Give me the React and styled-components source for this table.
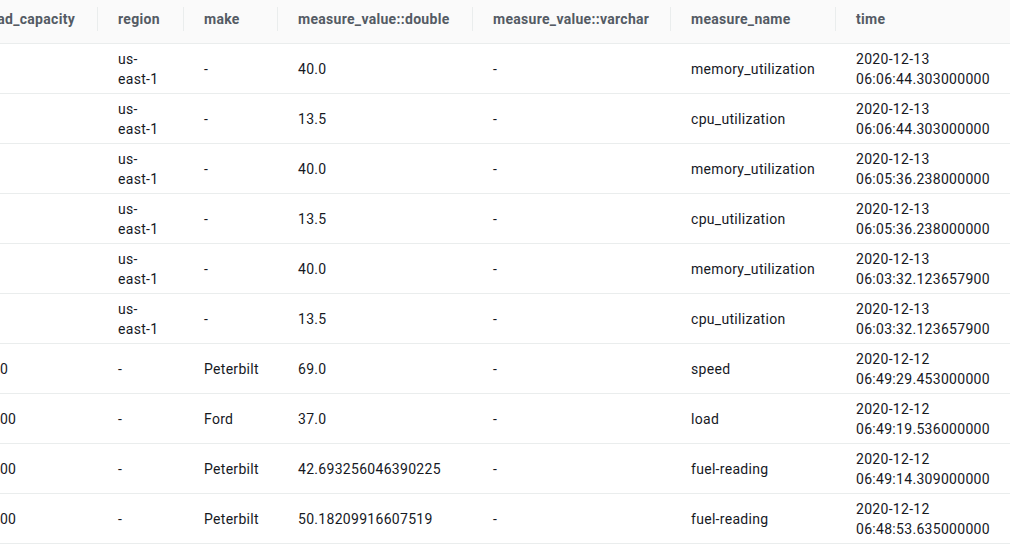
import React from "react";
import styled, { createGlobalStyle } from "styled-components";

const Global = createGlobalStyle`
  html, body { margin: 0; padding: 0; background: #ffffff; }
  body { font-family: Roboto, "Open Sans", Arial, sans-serif; -webkit-font-smoothing: antialiased; }
`;

const Viewport = styled.div`
  width: 1010px;
  height: 545px;
  overflow: hidden;
  background: #ffffff;
`;

const Table = styled.table`
  border-collapse: separate;
  border-spacing: 0;
  table-layout: fixed;
  width: ${(p) => p.$width}px;
  margin-left: -36px;
  font-size: 14px;
  line-height: 20px;
  letter-spacing: 0.3px;
  color: #16191f;
`;

const HeadCell = styled.th`
  position: relative;
  height: 38px;
  padding: 0 20px 5px 21px;
  background: #fafafa;
  border-bottom: 1px solid #eaeded;
  text-align: left;
  font-weight: 700;
  color: #545b64;
  white-space: nowrap;
  overflow: hidden;
  vertical-align: middle;
  &::before {
    content: "";
    display: ${(p) => (p.$first ? "none" : "block")};
    position: absolute;
    left: 0;
    top: 7px;
    height: 24px;
    width: 1px;
    background: #eaeded;
  }
`;

const Cell = styled.td`
  height: 49px;
  padding: 0 16px 0 ${(p) => (p.$first ? "19.6px" : "21px")};
  border-bottom: 1px solid #eaeded;
  vertical-align: middle;
  text-align: left;
  overflow-wrap: break-word;
`;

const columns = [
  { key: "load_capacity", width: 133 },
  { key: "region", width: 86 },
  { key: "make", width: 94 },
  { key: "measure_value::double", width: 195 },
  { key: "measure_value::varchar", width: 198 },
  { key: "measure_name", width: 165 },
  { key: "time", width: 175 },
];

const rows = [
  ["-", "us-east-1", "-", "40.0", "-", "memory_utilization", "2020-12-13 06:06:44.303000000"],
  ["-", "us-east-1", "-", "13.5", "-", "cpu_utilization", "2020-12-13 06:06:44.303000000"],
  ["-", "us-east-1", "-", "40.0", "-", "memory_utilization", "2020-12-13 06:05:36.238000000"],
  ["-", "us-east-1", "-", "13.5", "-", "cpu_utilization", "2020-12-13 06:05:36.238000000"],
  ["-", "us-east-1", "-", "40.0", "-", "memory_utilization", "2020-12-13 06:03:32.123657900"],
  ["-", "us-east-1", "-", "13.5", "-", "cpu_utilization", "2020-12-13 06:03:32.123657900"],
  ["100", "-", "Peterbilt", "69.0", "-", "speed", "2020-12-12 06:49:29.453000000"],
  ["1000", "-", "Ford", "37.0", "-", "load", "2020-12-12 06:49:19.536000000"],
  ["1000", "-", "Peterbilt", "42.693256046390225", "-", "fuel-reading", "2020-12-12 06:49:14.309000000"],
  ["1000", "-", "Peterbilt", "50.18209916607519", "-", "fuel-reading", "2020-12-12 06:48:53.635000000"],
];

export default function App() {
  const total = columns.reduce((s, c) => s + c.width, 0);
  return (
    <Viewport>
      <Global />
      <Table $width={total}>
        <colgroup>
          {columns.map((c) => (
            <col key={c.key} style={{ width: c.width }} />
          ))}
        </colgroup>
        <thead>
          <tr>
            {columns.map((c, i) => (
              <HeadCell key={c.key} $first={i === 0}>
                {c.key}
              </HeadCell>
            ))}
          </tr>
        </thead>
        <tbody>
          {rows.map((r, ri) => (
            <tr key={ri}>
              {r.map((v, ci) => (
                <Cell key={ci} $first={ci === 0}>
                  {v}
                </Cell>
              ))}
            </tr>
          ))}
        </tbody>
      </Table>
    </Viewport>
  );
}
